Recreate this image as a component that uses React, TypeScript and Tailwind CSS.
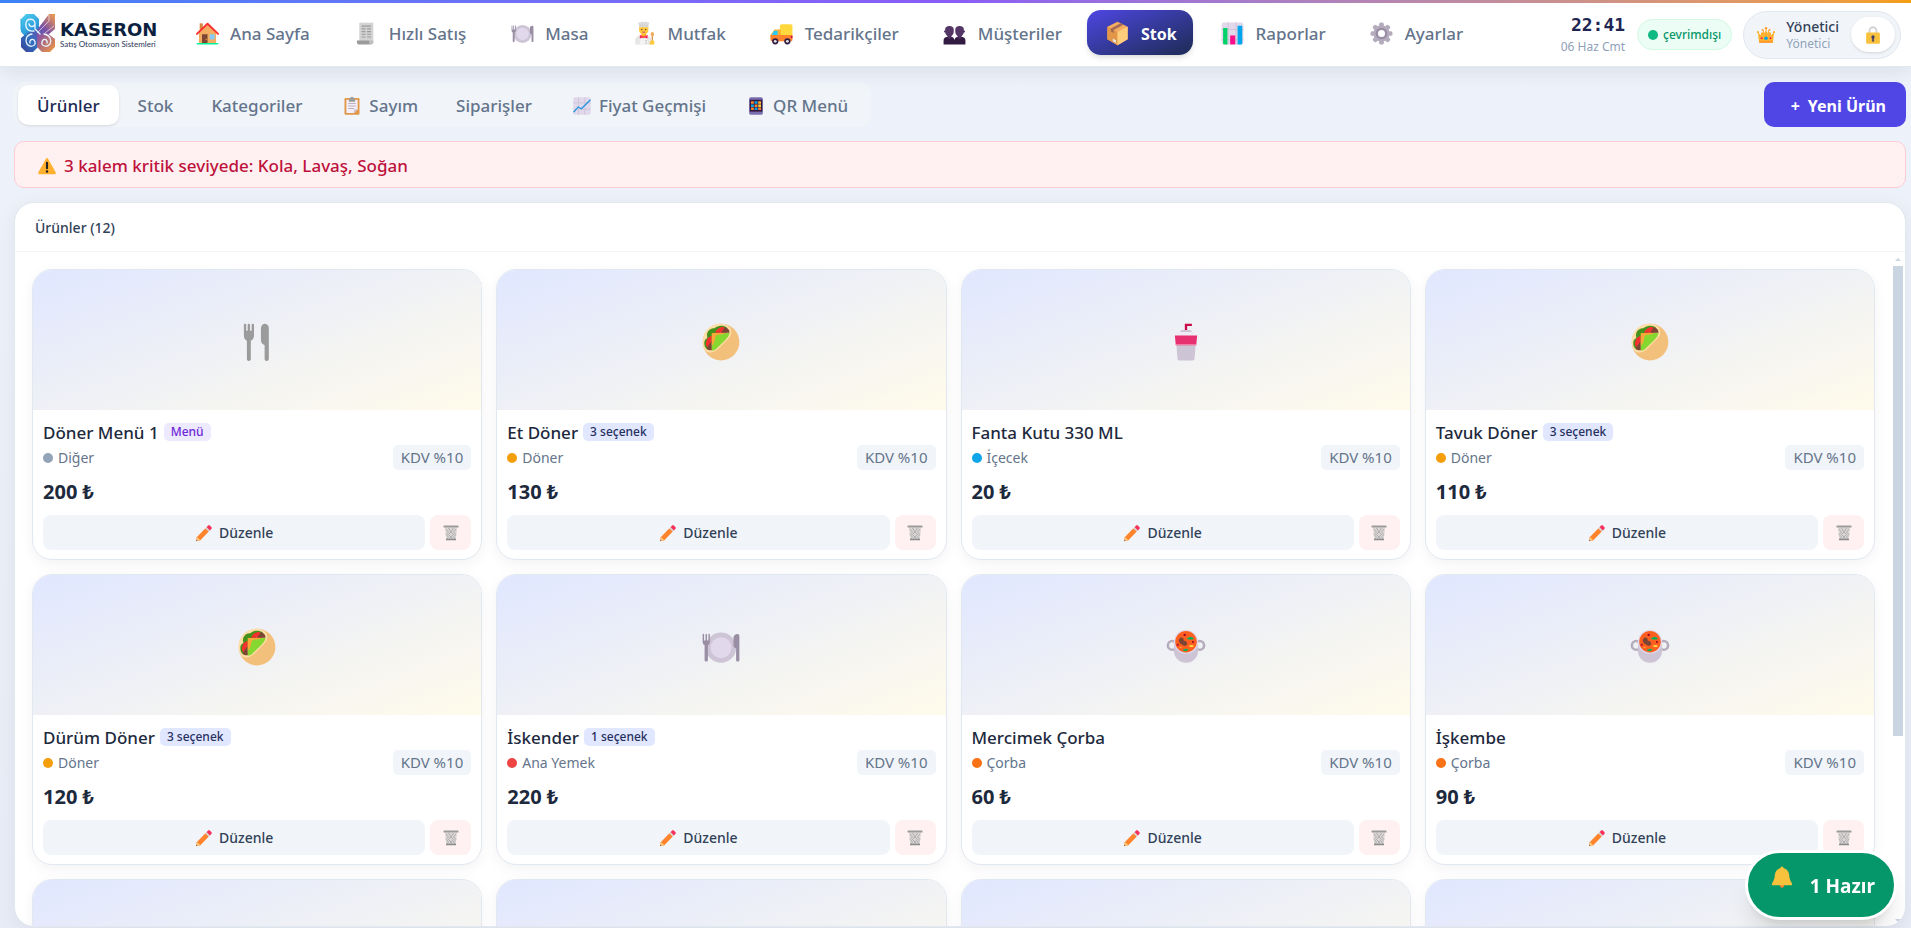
import React, { useState } from 'react';
import clsx from 'clsx';

type IconProps = { className?: string };

type Product = {
  name: string;
  badge?: string;
  isMenu?: boolean;
  category: string;
  dot: string;
  price: number;
  Icon: (props: IconProps) => React.ReactElement;
};

/* ---------- Icons ---------- */

function Svg({ className, children }: { className?: string; children: React.ReactNode }) {
  return (
    <svg viewBox="0 0 32 32" className={clsx('shrink-0', className)} aria-hidden="true">
      {children}
    </svg>
  );
}

const HouseIcon = ({ className }: IconProps) => (
  <Svg className={className}>
    <rect x="6" y="3" width="4" height="8" fill="#d3883e" />
    <path d="M5 15 16 5l11 10v14H5z" fill="#f3ad61" />
    <path d="M2.5 16.5 16 3.5l13.500 13" fill="none" stroke="#f8312f" strokeWidth="2.600" strokeLinecap="round" strokeLinejoin="round" />
    <rect x="9" y="17" width="7" height="12" fill="#7d4533" />
    <circle cx="14.300" cy="23.500" r=".8" fill="#f9c23c" />
    <rect x="19" y="17" width="6" height="6.500" fill="#83cbff" />
    <rect x="2" y="28" width="28" height="2" rx="1" fill="#00f397" />
  </Svg>
);

const ReceiptIcon = ({ className }: IconProps) => (
  <Svg className={className}>
    <path d="M8 3l1.500-1.500L11 3l1.500-1.500L14 3l1.500-1.500L17 3l1.500-1.500L20 3l1.500-1.500L23 3l1.500-1.500L26 3v25H8z" fill="#d3d3d3" />
    <g stroke="#9b9b9b" strokeWidth="1.500">
      <path d="M11 6.500h12M11 10h5M18 10h5M11 13.500h5M18 13.500h5M11 17h5M18 17h5M11 20.500h5M18 20.500h5" />
    </g>
    <path d="M5 25h16v2.500a2.500 2.500 0 0 0 2.500 2.500H7.500A2.500 2.500 0 0 1 5 27.500z" fill="#9b9b9b" />
    <path d="M21 25h5v2.500a2.500 2.500 0 0 1-5 0z" fill="#bebebe" />
  </Svg>
);

const PlateIcon = ({ className }: IconProps) => (
  <Svg className={className}>
    <circle cx="16" cy="16.500" r="11.500" fill="#cdc4d6" />
    <circle cx="16" cy="16.500" r="8" fill="#e1d8ec" />
    <path d="M2 6.500v5.500c0 1.500.6 2.200 1.500 2.500v11.500c0 1.300 2.500 1.300 2.500 0V14.500c.9-.3 1.500-1 1.500-2.500V6.500c0-.8-1.100-.8-1.100 0V11H5.300V6.500c0-.8-1.100-.8-1.100 0V11H3.100V6.500C3.100 5.700 2 5.700 2 6.500z" fill="#998ea4" />
    <path d="M30 7.500v18.500c0 1.300-2.500 1.300-2.500 0V17c-1.300-.4-2-1-2-2.500V9c0-2 1.500-3 3-3 .9 0 1.500.6 1.500 1.500z" fill="#998ea4" />
  </Svg>
);

const CookIcon = ({ className }: IconProps) => (
  <Svg className={className}>
    <path d="M4 30v-4.500C4 21.500 7 19 10.500 19h8c3.500 0 6.500 2.500 6.500 6.500V30z" fill="#e6e6e6" />
    <path d="M10 19.500 15 23l5-3.500V30H10z" fill="#f4f4f4" />
    <path d="M12 15h6v4l-3 3-3-3z" fill="#f9a825" />
    <path d="M10 17.500l5 2.500 5-2.500v5l-5-1.500-5 1.500z" fill="#f8315a" />
    <path d="M9 7h12v4.500c0 3.500-2.500 6-6 6s-6-2.500-6-6z" fill="#ffc83d" />
    <circle cx="12.600" cy="11" r=".9" fill="#402a32" />
    <circle cx="17.400" cy="11" r=".9" fill="#402a32" />
    <path d="M13.200 14.300h3.600" stroke="#bb1d80" strokeWidth="1" />
    <path d="M9 8V5C6.500 3.500 8.500 1 10.500 1.800c1.500-1.400 3-1.400 4.500-.3 1.500-1.100 3-1.100 4.500.3 2-.8 4 1.700 1.500 3.200v3z" fill="#dcdcdc" />
    <path d="M10.500 4.500v3M13.500 4.500v3M16.500 4.500v3M19.500 4.500v3" stroke="#bebebe" strokeWidth=".7" />
    <circle cx="18" cy="25" r=".8" fill="#9b9b9b" />
    <circle cx="18" cy="28" r=".8" fill="#9b9b9b" />
    <path d="M26 19v8" stroke="#d3883e" strokeWidth="1.500" />
    <ellipse cx="26" cy="17" rx="2.200" ry="3" fill="#f3ad61" />
    <path d="M23.500 25.500c1-1.200 5-1.200 5 1V30h-6v-2z" fill="#ffc83d" />
  </Svg>
);

const TruckIcon = ({ className }: IconProps) => (
  <Svg className={className}>
    <path d="M14 6a2 2 0 0 1 2-2h12a2 2 0 0 1 2 2v13H14z" fill="#ffd83d" />
    <path d="M7 11h8v12H2v-5z" fill="#ffb02e" />
    <path d="M6.500 12.500H11v5.500H3.500z" fill="#26c9fc" />
    <path d="M2 18h28v6a2 2 0 0 1-2 2H4a2 2 0 0 1-2-2z" fill="#ff822d" />
    <rect x="28" y="19" width="2" height="3" fill="#ca0b4a" />
    <circle cx="8" cy="26" r="4" fill="#321b41" />
    <circle cx="8" cy="26" r="1.800" fill="#e6e6e6" />
    <circle cx="23.500" cy="26" r="4" fill="#321b41" />
    <circle cx="23.500" cy="26" r="1.800" fill="#e6e6e6" />
  </Svg>
);

const PeopleIcon = ({ className }: IconProps) => (
  <Svg className={className}>
    <path d="M2 30v-5c0-3 2-4.500 4-4.500h6c2.500 0 4 2 4 4.500 0-2.500 1.500-4.500 4-4.500h6c2 0 4 1.500 4 4.500v5z" fill="#321b41" />
    <path d="M7 18h5v4c-1.500 1.500-3.500 1.500-5 0zM20 18h5v4c-1.500 1.500-3.500 1.500-5 0z" fill="#4a2b5a" />
    <path d="M4 11c0-3 2-4.500 5.500-4.500S15 8 15 11v2.500c0 3.500-2.500 6.500-5.500 6.500S4 17 4 13.500z" fill="#533566" />
    <path d="M17 11c0-3 2-4.500 5.500-4.500S28 8 28 11v2.500c0 3.500-2.500 6.500-5.500 6.500S17 17 17 13.500z" fill="#533566" />
    <circle cx="3.800" cy="13.500" r="1.300" fill="#533566" />
    <circle cx="28.200" cy="13.500" r="1.300" fill="#533566" />
  </Svg>
);

const BoxIcon = ({ className }: IconProps) => (
  <Svg className={className}>
    <path d="M16 1 29 7.500v16L16 31 3 23.500v-16z" fill="#f3ad61" />
    <path d="M3 7.500 16 14v17L3 23.500z" fill="#e19747" />
    <path d="M29 7.500 16 14v17l13-7.500z" fill="#ffce7c" />
    <path d="M20 3l3.500 1.800L11 11.500v4l-3.500-2v-4z" fill="#a56953" />
    <path d="M10 22.500l4 2v3.500l-4-2z" fill="#e6e6e6" />
  </Svg>
);

const BarsIcon = ({ className }: IconProps) => (
  <Svg className={className}>
    <rect x="2" y="2" width="28" height="28" rx="3" fill="#e1d8ec" />
    <path d="M10.500 2v28M20.500 2v28M2 11h28M2 24h28" stroke="#cdc4d6" strokeWidth="1.300" />
    <path d="M4 9h5.500v21H5.500A1.500 1.500 0 0 1 4 28.500z" fill="#00d26a" />
    <path d="M13 18.500h6.500V30H13z" fill="#fc0e8b" />
    <path d="M22.500 6h6v22.500A1.500 1.500 0 0 1 27 30h-4.500z" fill="#00a6ed" />
  </Svg>
);

const GearIcon = ({ className }: IconProps) => (
  <Svg className={className}>
    <g fill="#b4acbc">
      <rect x="13" y="2" width="6" height="28" rx="2" />
      <rect x="13" y="2" width="6" height="28" rx="2" transform="rotate(45 16 16)" />
      <rect x="13" y="2" width="6" height="28" rx="2" transform="rotate(90 16 16)" />
      <rect x="13" y="2" width="6" height="28" rx="2" transform="rotate(135 16 16)" />
      <circle cx="16" cy="16" r="10.500" />
    </g>
    <circle cx="16" cy="16" r="6" fill="#fff" stroke="#998ea4" strokeWidth="3" />
  </Svg>
);

const CrownIcon = ({ className }: IconProps) => (
  <Svg className={className}>
    <path d="M5 28 3 12l6 5 3-9.500 2 6L16 5l2 8.500 2-6 3 9.500 6-5-2 16z" fill="#ffb02e" />
    <circle cx="3.200" cy="11.500" r="1.800" fill="#ffb02e" />
    <circle cx="28.800" cy="11.500" r="1.800" fill="#ffb02e" />
    <circle cx="16" cy="5" r="2" fill="#ff9a2d" />
    <circle cx="10.500" cy="8" r="1.600" fill="#ff9a2d" />
    <circle cx="21.500" cy="8" r="1.600" fill="#ff9a2d" />
    <rect x="5" y="25.500" width="22" height="3" fill="#ff9a2d" />
    <path d="M10 12v7M22 12v7" stroke="#ffb02e" strokeWidth="4" />
    <circle cx="16" cy="21" r="2.800" fill="#00a6ed" />
    <circle cx="9" cy="21" r="1.500" fill="#f70a5d" />
    <circle cx="23" cy="21" r="1.500" fill="#f70a5d" />
  </Svg>
);

const LockIcon = ({ className }: IconProps) => (
  <Svg className={className}>
    <path d="M10.500 14V9a5.500 5.500 0 0 1 11 0v5" fill="none" stroke="#d3d3d3" strokeWidth="3" />
    <rect x="5" y="12" width="22" height="18" rx="2" fill="#f9c23c" />
    <circle cx="16" cy="19" r="2.600" fill="#433b6b" />
    <path d="M15 20h2v6h-2z" fill="#433b6b" stroke="#433b6b" strokeLinejoin="round" />
  </Svg>
);

const WarningIcon = ({ className }: IconProps) => (
  <Svg className={className}>
    <path d="M14.500 4c.7-1.200 2.300-1.200 3 0l12.500 22.500c.7 1.300-.2 2.500-1.500 2.500h-25c-1.300 0-2.200-1.200-1.500-2.500z" fill="#ffb02e" />
    <path d="M16 11v8.500" stroke="#212121" strokeWidth="3.400" strokeLinecap="round" />
    <circle cx="16" cy="24.800" r="1.900" fill="#212121" />
  </Svg>
);

const ClipboardIcon = ({ className }: IconProps) => (
  <Svg className={className}>
    <rect x="4" y="3" width="24" height="27" rx="2" fill="#e19747" />
    <path d="M7 6h18v15l-6 6H7z" fill="#f3eef8" />
    <path d="M25 21h-6v6z" fill="#cdc4d6" />
    <path d="M10 12h12M10 16h12M10 20h9" stroke="#b4acbc" strokeWidth="1.500" />
    <path d="M11 4h2a3 3 0 0 1 6 0h2v5H11z" fill="#9b9b9b" />
  </Svg>
);

const TrendIcon = ({ className }: IconProps) => (
  <Svg className={className}>
    <rect x="2" y="2" width="28" height="28" rx="3" fill="#e1d8ec" />
    <path d="M10.500 2v28M20.500 2v28M2 11h28M2 21h28" stroke="#cdc4d6" strokeWidth="1.500" />
    <path d="M2.500 26 10 17.500l5 3L29.500 6" fill="none" stroke="#1e96e0" strokeWidth="2" strokeLinejoin="round" />
  </Svg>
);

const PhoneIcon = ({ className }: IconProps) => (
  <Svg className={className}>
    <rect x="5" y="2" width="22" height="28" rx="3" fill="#7a6db0" />
    <rect x="6" y="6" width="20" height="19" fill="#321b41" />
    <path d="M8 8.500h4.500v4H8zM13.800 13.500h4.500v4h-4.500zM19.500 18.500H24v4h-4.500zM8 18.500h4.500v4H8z" fill="#ff822d" />
    <path d="M13.800 8.500h4.500v4h-4.500zM8 13.500h4.500v4H8zM13.800 18.500h4.500v4h-4.500z" fill="#00a6ed" />
    <path d="M19.500 8.500H24v4h-4.500z" fill="#ffb02e" />
    <path d="M19.500 13.500H24v4h-4.500z" fill="#fcd53f" />
  </Svg>
);

const UtensilsIcon = ({ className }: IconProps) => (
  <Svg className={className}>
    <path d="M6 3v8c0 2.200 1 3.200 2.300 4v14c0 1.900 3 1.900 3 0V15c1.400-.8 2.400-1.800 2.400-4V3c0-1.300-1.800-1.300-1.800 0v4.500h-1.200V3c0-1.300-1.800-1.300-1.800 0v4.500H7.800V3C7.800 1.700 6 1.700 6 3z" fill="#9b9b9b" />
    <path d="M25 5v24c0 1.900-3.200 1.900-3.200 0V18.500c-1.800-.8-2.800-2-2.800-4V5.500C19 3.500 20.500 2 22 2s3 1.500 3 3z" fill="#9b9b9b" />
  </Svg>
);

const WrapIcon = ({ className }: IconProps) => (
  <Svg className={className}>
    <circle cx="16" cy="16" r="14" fill="#f3c07b" />
    <path d="M2 16C2 8 8 2 16 2c4 0 7.500 2.200 7.800 6 .2 2.500-.8 4-2.500 5.700l-8 8C9.500 25 5 24.500 3.500 21.500 2.500 19.500 2 18 2 16z" fill="#ffdea7" />
    <path d="M5.500 12C4.500 8 8 5 11 5.500 13.500 3 18 3 20.500 5l-9 6.500-6 7z" fill="#44911b" />
    <path d="M3.300 16c.3-2 1.700-3 3.200-3l2 1v8C5 22.500 3 20 3.300 16z" fill="#44911b" />
    <path d="M11.500 9c1-3 3.500-4.500 6.500-4.500L20 9zM4.500 18.500c0-4 1.500-6.500 4.500-7V16l-3.500 4z" fill="#f8312f" />
    <path d="M16 9l2.800-4.200C21 5 22.500 6.500 22.500 9zM9 15v7.300c-2 .3-3.200-.4-4-1.600z" fill="#7d4533" />
    <path d="M9 9.200h13.500c-.3 2-1.300 3.300-2.800 4.800l-6.500 6.300C11.800 21.800 10.500 22.600 9 22.500z" fill="#86d72f" />
    <path d="M9 9.200h10.500c-1.500 1-3.500 1.200-5.500 1.200-2 .1-2.500 1.800-2.700 4C11.100 16.500 10 18 9 18.800z" fill="#f9a839" />
  </Svg>
);

const DrinkIcon = ({ className }: IconProps) => (
  <Svg className={className}>
    <path d="M16 8V3h4.500" fill="none" stroke="#ca0b4a" strokeWidth="1.800" />
    <path d="M11.500 8.500c.3-1.500 1-1.700 2-1.700h5c1 0 1.700.2 2 1.700z" fill="#cdc4d6" />
    <rect x="9" y="8.300" width="14" height="3.200" rx="1" fill="#f0eaf5" />
    <path d="M8.500 16h15l-1 12.500c-.1 1-.6 1.500-1.500 1.500H11c-.9 0-1.400-.5-1.500-1.500z" fill="#cdc4d6" />
    <path d="M7.500 11h17l-.7 7.500H8.200z" fill="#e6306f" />
    <path d="M8.200 18h15.600" stroke="#f48fb1" strokeWidth=".7" />
  </Svg>
);

const SoupIcon = ({ className }: IconProps) => (
  <Svg className={className}>
    <circle cx="5.500" cy="14.800" r="3.300" fill="none" stroke="#b4acbc" strokeWidth="1.900" />
    <circle cx="26.500" cy="14.800" r="3.300" fill="none" stroke="#b4acbc" strokeWidth="1.900" />
    <path d="M6.800 13h18.400v6c0 5-4 9-9.200 9s-9.200-4-9.200-9z" fill="#cdc4d6" />
    <circle cx="16" cy="12" r="9.200" fill="#e1d8ec" />
    <circle cx="16" cy="12" r="8.200" fill="#ff5f1f" />
    <path d="M11 9.500c1.500-1.500 3.500-.2 3.300 1.500 1.700.3 3.200 1.500 2.400 3.300-.8 1.300-2.500 1-3.500 0-2-.8-3.500-3-2.200-4.800z" fill="#7d4533" />
    <path d="M16.500 9.800c2-1.800 4-1.800 5.500-.3-1 1.300-2.500.6-3.500.9zM13.500 18.500c1.500-1.500 3.500-1.500 4.500-.4-1.500 1.300-3 1.400-4.500.4z" fill="#00b35a" />
    <path d="M18 15.500c1-1.300 3-1.500 4.200-.3-1 1.100-2.800 1.200-4.200.3zM11 16.300c1-.8 1.700-.5 2 .3z" fill="#fcd53f" />
    <g fill="#990838">
      <circle cx="15" cy="6.800" r=".9" />
      <circle cx="21.300" cy="12.200" r=".8" />
      <circle cx="9.700" cy="14.300" r=".8" />
    </g>
  </Svg>
);

const PencilIcon = ({ className }: IconProps) => (
  <Svg className={className}>
    <path d="M3 23.500 18.500 7.500l6 6L9 29.500l-7 1z" fill="#ff822d" />
    <path d="M3.500 23 9.500 29l-7 1.500z" fill="#ffce7c" />
    <path d="M2.800 27.800 4.600 29.500 2 30.300z" fill="#533566" />
    <path d="M18.500 7.500l2.500-2.500 6 6-2.500 2.500z" fill="#d3d3d3" />
    <path d="M20.500 5.500 23 3c1.200-1.200 2.800-1 3.800 0L29 5.200c1 1 1.200 2.600 0 3.800l-2.500 2.500z" fill="#f8315a" />
  </Svg>
);

const TrashIcon = ({ className }: IconProps) => (
  <Svg className={className}>
    <path d="M4 5h24l-2.500 25h-19z" fill="#d9d5d5" />
    <path d="M6 8l5 6-4.500 5 4.500 5-3.500 5M11 6l5 8-5 5 5 5-4 5M21 6l-5 8 5 5-5 5 4 5M26 8l-5 6 4.500 5-4.500 5 3.500 5" fill="none" stroke="#9b9b9b" strokeWidth="1.300" />
    <rect x="1" y="1" width="30" height="4" rx="1" fill="#9b9b9b" />
    <rect x="6" y="27.500" width="20" height="3" fill="#8a8a8a" />
  </Svg>
);

const BellIcon = ({ className }: IconProps) => (
  <Svg className={className}>
    <circle cx="16" cy="27.500" r="2.800" fill="#ff822d" />
    <path d="M14 4a2 2 0 0 1 4 0c4.500 1 7 4.500 7.500 9 .4 4.500.8 7 3.800 11.500.7 1.200.2 2.500-1.300 2.500H4c-1.500 0-2-1.300-1.300-2.500C5.700 20 6.100 17.500 6.500 13 7 8.500 9.500 5 14 4z" fill="#f9c23c" />
  </Svg>
);

function Logo() {
  return (
    <svg viewBox="0 0 36 40" className="h-10 w-9 shrink-0" aria-hidden="true">
      <defs>
        <linearGradient id="logoBlue" x1="0" y1="0" x2="0.6" y2="1">
          <stop offset="0" stopColor="#4fd0f0" />
          <stop offset="0.6" stopColor="#2f9fdc" />
          <stop offset="1" stopColor="#3f4fae" />
        </linearGradient>
        <linearGradient id="logoWarm" x1="1" y1="0" x2="0" y2="1">
          <stop offset="0" stopColor="#f6a04a" />
          <stop offset="0.35" stopColor="#7a4fa8" />
          <stop offset="0.7" stopColor="#2f6fc0" />
          <stop offset="1" stopColor="#3b3f94" />
        </linearGradient>
        <linearGradient id="logoCorner" x1="0" y1="0" x2="1" y2="1">
          <stop offset="0" stopColor="#7b4bb0" />
          <stop offset="1" stopColor="#f59a3c" />
        </linearGradient>
      </defs>
      <path d="M6 1h8l5 5v8l5 6-7 3-4 4-6-2-6-6V6z" fill="url(#logoBlue)" />
      <path d="M29 1h6v15l-6 5-8 5-3 8-5 5H6l-5-5V25l6-5 10-3z" fill="url(#logoWarm)" />
      <path d="M17 21l10-1 8 6v8l-5 5h-8l-5-5z" fill="url(#logoCorner)" />
      <path d="M1 6v11l6 5" fill="none" stroke="#2aa8d8" strokeWidth="1" />
      <path d="M14 18c-6 1-9-3-8-8 1-5 8-5 9 0 0 4-5 5-6 1M15 10v6l5 5M12 21c-6 1-7 6-5 10 3 4 9 2 8-2-1-4-6-3-5 1M24 21c6 1 8 6 6 10-3 4-9 2-8-2 1-4 6-3 5 1" fill="none" stroke="#e8f4ff" strokeWidth="1.300" strokeLinecap="round" />
      <path d="M29 2v6L17 20M34 13l-9 7" fill="none" stroke="#fff" strokeWidth="1" opacity=".6" />
    </svg>
  );
}

/* ---------- Data ---------- */

const navItems = [
  { label: 'Ana Sayfa', Icon: HouseIcon },
  { label: 'Hızlı Satış', Icon: ReceiptIcon },
  { label: 'Masa', Icon: PlateIcon },
  { label: 'Mutfak', Icon: CookIcon },
  { label: 'Tedarikçiler', Icon: TruckIcon },
  { label: 'Müşteriler', Icon: PeopleIcon },
  { label: 'Stok', Icon: BoxIcon },
  { label: 'Raporlar', Icon: BarsIcon },
  { label: 'Ayarlar', Icon: GearIcon },
];

const tabs = [
  { label: 'Ürünler' },
  { label: 'Stok' },
  { label: 'Kategoriler' },
  { label: 'Sayım', Icon: ClipboardIcon },
  { label: 'Siparişler' },
  { label: 'Fiyat Geçmişi', Icon: TrendIcon },
  { label: 'QR Menü', Icon: PhoneIcon },
];

const products: Product[] = [
  { name: 'Döner Menü 1', badge: 'Menü', isMenu: true, category: 'Diğer', dot: 'bg-[#94a3b8]', price: 200, Icon: UtensilsIcon },
  { name: 'Et Döner', badge: '3 seçenek', category: 'Döner', dot: 'bg-[#f59e0b]', price: 130, Icon: WrapIcon },
  { name: 'Fanta Kutu 330 ML', category: 'İçecek', dot: 'bg-[#0ea5e9]', price: 20, Icon: DrinkIcon },
  { name: 'Tavuk Döner', badge: '3 seçenek', category: 'Döner', dot: 'bg-[#f59e0b]', price: 110, Icon: WrapIcon },
  { name: 'Dürüm Döner', badge: '3 seçenek', category: 'Döner', dot: 'bg-[#f59e0b]', price: 120, Icon: WrapIcon },
  { name: 'İskender', badge: '1 seçenek', category: 'Ana Yemek', dot: 'bg-[#ef4444]', price: 220, Icon: PlateIcon },
  { name: 'Mercimek Çorba', category: 'Çorba', dot: 'bg-[#f97316]', price: 60, Icon: SoupIcon },
  { name: 'İşkembe', category: 'Çorba', dot: 'bg-[#f97316]', price: 90, Icon: SoupIcon },
  { name: 'Kola', category: 'İçecek', dot: 'bg-[#0ea5e9]', price: 20, Icon: DrinkIcon },
  { name: 'Ayran', category: 'İçecek', dot: 'bg-[#0ea5e9]', price: 15, Icon: DrinkIcon },
  { name: 'Lahmacun', category: 'Ana Yemek', dot: 'bg-[#ef4444]', price: 70, Icon: PlateIcon },
  { name: 'Adana Kebap', category: 'Ana Yemek', dot: 'bg-[#ef4444]', price: 240, Icon: PlateIcon },
];

/* ---------- Components ---------- */

function Header() {
  const [active, setActive] = useState('Stok');

  return (
    <header className="relative z-10 shrink-0 border-b border-slate-200 bg-white shadow-[0_4px_20px_rgba(15,23,42,0.09)]">
      <div className="h-[3px] bg-linear-to-r from-[#3b82f6] via-[#8b5cf6] to-[#f59e0b]" />
      <div className="flex h-[63px] items-center pr-2.5 pl-5">
        <a href="#" className="flex w-[156px] items-center gap-1 pb-1">
          <Logo />
          <span className="flex flex-col pt-1 whitespace-nowrap">
            <span className="font-['DejaVu_Sans'] text-[18px] leading-[18px] font-bold text-[#0b1f3f]">KASERON</span>
            <span className="font-[Lato] text-[8px] leading-[10px] text-[#2b3558]">Satış Otomasyon Sistemleri</span>
          </span>
        </a>

        <nav className="flex items-center gap-[9px] pb-1">
          {navItems.map(({ label, Icon }) => (
            <button
              key={label}
              type="button"
              onClick={() => setActive(label)}
              className={clsx(
                'flex h-[45px] items-center gap-2 rounded-[14px] px-4 pt-0.5 whitespace-nowrap',
                active === label
                  ? 'bg-linear-to-br from-[#4f46e5] to-[#1e2a55] text-[16px] font-bold text-white shadow-md'
                  : 'text-[17px] font-medium text-[#64748b]'
              )}
            >
              <span className="flex w-[30px] justify-center">
                <Icon className="size-[25px]" />
              </span>
              {label}
            </button>
          ))}
        </nav>

        <div className="ml-auto flex items-center">
          <div className="mr-3 flex flex-col items-end">
            <span className="font-['DejaVu_Sans_Mono'] text-[18px] leading-6 font-bold text-[#1e2553]">22:41</span>
            <span className="text-[12px] leading-5 text-slate-400">06 Haz Cmt</span>
          </div>
          <div className="mr-[11px] flex h-[31px] items-center gap-[5px] rounded-full border border-[#d1fae5] bg-[#ecfdf5] px-2.5 text-[12px] font-medium text-[#059669]">
            <span className="size-2.5 rounded-full bg-[#10b981]" />
            çevrimdışı
          </div>
          <div className="flex h-12 items-center rounded-full border border-slate-200 bg-slate-100 pr-[5px] pl-3">
            <CrownIcon className="size-5" />
            <div className="mr-3 ml-2.5 flex flex-col">
              <span className="text-[14px] leading-[18px] font-medium text-slate-700">Yönetici</span>
              <span className="text-[12px] leading-4 text-slate-400">Yönetici</span>
            </div>
            <button type="button" aria-label="Kilitle" className="flex h-[35px] w-11 items-center justify-center rounded-full bg-white shadow-sm">
              <LockIcon className="size-5" />
            </button>
          </div>
        </div>
      </div>
    </header>
  );
}

function ProductCard({ product }: { product: Product }) {
  const { name, badge, isMenu, category, dot, price, Icon } = product;

  return (
    <article className="overflow-hidden rounded-[20px] border border-slate-200 bg-white shadow-[0_4px_14px_rgba(15,23,42,0.05)]">
      <div className="flex h-[140px] items-center justify-center bg-linear-[160deg] from-[#e0e7ff] to-[#fffbeb] pt-1">
        <Icon className="size-[42px]" />
      </div>
      <div className="px-2.5 pt-2.5 pb-[9px]">
        <div className="flex h-[25px] items-center gap-[5px]">
          <h3 className="text-[17px] leading-6 font-medium text-slate-800">{name}</h3>
          {badge && (
            <span
              className={clsx(
                'mb-0.5 flex h-[18px] items-center rounded-[5px] px-[7px] text-[12px] font-medium',
                isMenu ? 'bg-[#ede9fe] text-[#6d28d9]' : 'bg-[#e0e7ff] text-[#27305f]'
              )}
            >
              {badge}
            </span>
          )}
        </div>
        <div className="flex items-center justify-between text-[14px] text-[#64748b]">
          <span className="flex items-center gap-[5px]">
            <span className={clsx('size-2.5 rounded-full', dot)} />
            {category}
          </span>
          <span className="flex h-[25px] items-center rounded-[5px] bg-slate-100 px-2 text-[15px]">KDV %10</span>
        </div>
        <p className="mt-2 text-[20px] leading-[27px] font-bold text-slate-800">{price} ₺</p>
        <div className="mt-2.5 flex gap-[5px]">
          <button type="button" className="flex h-[35px] flex-1 items-center justify-center gap-1.5 rounded-lg bg-slate-100 text-[14px] font-medium text-slate-700">
            <PencilIcon className="size-[18px]" />
            Düzenle
          </button>
          <button type="button" aria-label={`${name} sil`} className="flex h-[35px] w-[41px] items-center justify-center rounded-lg bg-[#fff1f1]">
            <TrashIcon className="size-4" />
          </button>
        </div>
      </div>
    </article>
  );
}

export default function App() {
  const [tab, setTab] = useState('Ürünler');

  return (
    <div className="flex h-screen flex-col overflow-hidden bg-linear-to-b from-[#eef2fa] to-[#e8ecf6] font-['Noto_Sans','Open_Sans',sans-serif]">
      <Header />

      <main className="flex min-h-0 flex-1 flex-col gap-3.5 pt-[15px] pr-[5px] pb-px pl-3.5">
        <div className="flex items-center justify-between">
          <div className="flex h-[45px] items-center rounded-xl bg-slate-100 px-1">
            {tabs.map(({ label, Icon }) => (
              <button
                key={label}
                type="button"
                onClick={() => setTab(label)}
                className={clsx(
                  'flex h-10 items-center gap-[5px] rounded-[10px] px-[19px] pt-0.5 text-[17px] font-medium whitespace-nowrap',
                  tab === label ? 'bg-white text-[#1e2a55] shadow-sm' : 'text-[#64748b]'
                )}
              >
                {Icon && (
                  <span className="flex w-6 justify-center">
                    <Icon className="size-5" />
                  </span>
                )}
                {label}
              </button>
            ))}
          </div>
          <button type="button" className="flex h-[45px] items-center gap-2 rounded-[10px] bg-[#4f46e5] px-5 pt-0.5 text-[16px] font-bold text-white">
            <span className="w-4 text-right">+</span>
            Yeni Ürün
          </button>
        </div>

        <div role="alert" className="flex h-[47px] shrink-0 items-center gap-[7px] rounded-[10px] border border-[#fecdd3] bg-[#fff1f1] px-[22px] pt-0.5 text-[17px] font-medium text-[#be123c]">
          <WarningIcon className="size-5" />
          3 kalem kritik seviyede: Kola, Lavaş, Soğan
        </div>

        <section className="flex min-h-0 flex-1 flex-col overflow-hidden rounded-[20px] border border-slate-200 bg-white shadow-[0_4px_20px_rgba(15,23,42,0.06)]">
          <h2 className="flex h-[49px] shrink-0 items-center border-b border-slate-100 px-5 text-[14px] font-medium text-slate-700">
            Ürünler (12)
          </h2>
          <div className="flex min-h-0 flex-1">
            <div className="grid flex-1 auto-rows-max grid-cols-4 content-start gap-3.5 overflow-y-auto pt-[17px] pr-[18px] pb-4 pl-[17px] [scrollbar-width:none]">
              {products.map((product) => (
                <ProductCard key={product.name} product={product} />
              ))}
            </div>
            {/* Scroll track */}
            <div className="mr-0.5 flex w-2.5 flex-col items-center pt-1.5 pb-1">
              <svg viewBox="0 0 6 3" className="h-[3px] w-1.5" aria-hidden="true">
                <path d="M0 3 3 0l3 3z" fill="#cbd5e1" />
              </svg>
              <div className="mt-[5px] flex w-full flex-1 flex-col">
                <div className="h-[72%] bg-slate-300" />
              </div>
              <svg viewBox="0 0 6 3" className="h-[3px] w-1.5" aria-hidden="true">
                <path d="M0 0l3 3 3-3z" fill="#cbd5e1" />
              </svg>
            </div>
          </div>
        </section>
      </main>

      {/* Ready orders */}
      <button type="button" className="fixed right-3.5 bottom-2 z-20 flex h-[70px] items-center gap-4 rounded-full border-[3px] border-white bg-[#059669] pr-[19px] pl-[22px] text-[19px] font-bold text-white shadow-xl">
        <BellIcon className="mb-4 size-6" />
        <span className="pt-0.5">1 Hazır</span>
      </button>
    </div>
  );
}
